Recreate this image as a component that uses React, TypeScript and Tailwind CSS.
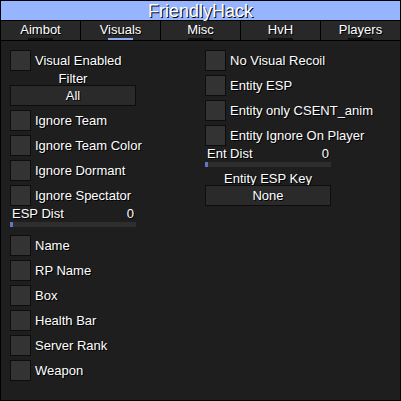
const tabs = ['Aimbot', 'Visuals', 'Misc', 'HvH', 'Players'];
const active = 'Visuals';

const shadow = '[text-shadow:1px_1px_0_#000]';

function Check({ label }: { label: string }) {
  return (
    <div className="flex items-center h-[21px] gap-[4px]">
      <div className="w-[21px] h-[21px] flex-shrink-0 bg-[#333333] border border-[#0d0d0d]" />
      <span className={`whitespace-nowrap text-white text-[13px] leading-none ${shadow}`}>{label}</span>
    </div>
  );
}

function Label({ text }: { text: string }) {
  return (
    <div className={`h-[14px] flex items-center justify-center whitespace-nowrap text-white text-[13px] leading-none ${shadow}`}>
      {text}
    </div>
  );
}

function Button({ text }: { text: string }) {
  return (
    <div
      className={`h-[21px] flex items-center justify-center bg-[#2a2a2a] border border-[#0d0d0d] text-white text-[13px] leading-none ${shadow}`}
    >
      {text}
    </div>
  );
}

function Slider({ label, value }: { label: string; value: string }) {
  return (
    <div className="flex flex-col">
      <div className={`h-[14px] flex items-center justify-between pl-[2px] pr-[2px] text-white text-[13px] leading-none ${shadow}`}>
        <span>{label}</span>
        <span>{value}</span>
      </div>
      <div className="mt-[2px] h-[5px] bg-[#2e2e2e] flex">
        <div className="w-[3px] h-full bg-[#6473c8]" />
      </div>
    </div>
  );
}

export default function App() {
  return (
    <div
      className="w-[401px] h-[401px] bg-[#1e1e1e] border border-black flex flex-col"
      style={{ fontFamily: '"Liberation Sans", Arial, sans-serif' }}
    >
      {/* Title */}
      <div className="h-[20px] bg-[#97b4ff] border-b border-black flex items-center justify-center">
        <span className={`text-white text-[18px] leading-none ${shadow}`}>FriendlyHack</span>
      </div>

      {/* Tabs */}
      <div className="h-[20px] bg-[#282828] border-b border-black flex">
        {tabs.map((t, i) => (
          <div
            key={t}
            className={`flex flex-col items-center pt-[2px] ${i < tabs.length - 1 ? 'w-[80px] border-r border-black' : 'flex-1'}`}
          >
            <span className={`text-white text-[13px] leading-[13px] ${shadow}`}>{t}</span>
            <span className={`mt-[2px] w-[25px] h-[3px] ${t === active ? 'bg-[#8ea8f4]' : 'bg-[#111111]'}`} />
          </div>
        ))}
      </div>

      {/* Content */}
      <div className="flex pt-[9px] pl-[9px] gap-[69px]">
        <div className="w-[126px] flex flex-col">
          <Check label="Visual Enabled" />
          <Label text="Filter" />
          <Button text="All" />
          <div className="mt-[4px] flex flex-col gap-[4px]">
            <Check label="Ignore Team" />
            <Check label="Ignore Team Color" />
            <Check label="Ignore Dormant" />
            <Check label="Ignore Spectator" />
          </div>
          <Slider label="ESP Dist" value="0" />
          <div className="mt-[8px] flex flex-col gap-[4px]">
            <Check label="Name" />
            <Check label="RP Name" />
            <Check label="Box" />
            <Check label="Health Bar" />
            <Check label="Server Rank" />
            <Check label="Weapon" />
          </div>
        </div>

        <div className="w-[126px] flex flex-col">
          <div className="flex flex-col gap-[4px]">
            <Check label="No Visual Recoil" />
            <Check label="Entity ESP" />
            <Check label="Entity only CSENT_anim" />
            <Check label="Entity Ignore On Player" />
          </div>
          <Slider label="Ent Dist" value="0" />
          <div className="mt-[4px]">
            <Label text="Entity ESP Key" />
          </div>
          <Button text="None" />
        </div>
      </div>
    </div>
  );
}
